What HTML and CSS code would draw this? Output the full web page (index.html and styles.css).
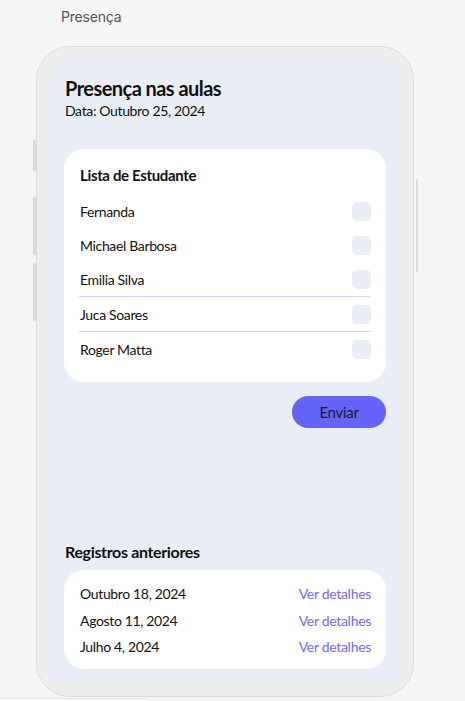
FILE: index.html
```html
<!DOCTYPE html>
<html lang="pt">
<head>
<meta charset="utf-8">
<title>Presença</title>
<link rel="stylesheet" href="styles.css">
</head>
<body>
<div class="page-title">Presença</div>
<div class="phone">
  <span class="side-btn b1"></span>
  <span class="side-btn b2"></span>
  <span class="side-btn b3"></span>
  <span class="side-btn b4"></span>
  <div class="screen">
    <h1 class="title">Presença nas aulas</h1>
    <p class="date">Data: Outubro 25, 2024</p>
    <section class="card list">
      <h2 class="card-title">Lista de Estudante</h2>
      <div class="row"><span>Fernanda</span><span class="check"></span></div>
      <div class="row"><span>Michael Barbosa</span><span class="check"></span></div>
      <div class="row line"><span>Emilia Silva</span><span class="check"></span></div>
      <div class="row line"><span>Juca Soares</span><span class="check"></span></div>
      <div class="row"><span>Roger Matta</span><span class="check"></span></div>
    </section>
    <div class="actions"><button class="send">Enviar</button></div>
    <section class="history">
      <h2 class="sub-title">Registros anteriores</h2>
      <div class="card records">
        <div class="rec"><span>Outubro 18, 2024</span><a class="link">Ver detalhes</a></div>
        <div class="rec"><span>Agosto 11, 2024</span><a class="link">Ver detalhes</a></div>
        <div class="rec"><span>Julho 4, 2024</span><a class="link">Ver detalhes</a></div>
      </div>
    </section>
  </div>
</div>
<div class="under"></div>
</body>
</html>
```
FILE: styles.css
```css
* { box-sizing: border-box; }
html, body { margin: 0; padding: 0; }
body {
  background: #f5f5f5;
  font-family: Lato, "Open Sans", sans-serif;
  color: #111;
  width: 465px;
  height: 701px;
  overflow: hidden;
}
.page-title {
  font-family: Inter, Roboto, sans-serif;
  font-size: 14px;
  color: #555;
  padding: 8px 0 0 61px;
  height: 46px;
  letter-spacing: -0.2px;
}
.phone {
  position: relative;
  margin-left: 36px;
  width: 378px;
  height: 651px;
  background: #ededed;
  border: 1.5px solid #dcdcdc;
  border-radius: 34px;
  padding: 12px;
}
.side-btn {
  position: absolute;
  width: 3px;
  background: #d9d9d9;
  border-radius: 1px;
}
.b1 { left: -4.5px; top: 93px; height: 31px; }
.b2 { left: -4.5px; top: 150px; height: 58px; }
.b3 { left: -4.5px; top: 216px; height: 58px; }
.b4 { right: -4.5px; top: 132px; height: 93px; width: 2px; }
.screen {
  height: 100%;
  background: #e9eef6;
  border-radius: 22px;
  padding: 17px 15px 15px 15px;
  display: flex;
  flex-direction: column;
  letter-spacing: -0.35px;
}
.title {
  margin: 0 0 0 1px;
  font-size: 20px;
  font-weight: 700;
  line-height: 24px;
  letter-spacing: -0.55px;
}
.date {
  margin: 1px 0 0 1px;
  font-size: 14px;
  line-height: 20px;
}
.card {
  background: #fff;
  border-radius: 20px;
}
.list {
  margin-top: 28px;
  padding: 16px 15px 16px 15px;
}
.card-title {
  margin: 0 0 9px 1px;
  font-size: 15px;
  font-weight: 700;
  line-height: 20px;
}
.row {
  display: flex;
  justify-content: space-between;
  align-items: center;
  height: 34px;
  font-size: 14px;
  padding-left: 1px;
}
.row.tall { height: 35px; }
.row.line { height: 35px; border-bottom: 1px solid #d3d3fb; }
.check {
  width: 19px;
  height: 19px;
  border-radius: 5px;
  background: #e9edf5;
}
.actions {
  display: flex;
  justify-content: flex-end;
  margin-top: 14px;
}
.send {
  width: 94px;
  height: 32px;
  border: none;
  border-radius: 16px;
  background: #6464fb;
  color: #1a1a2e;
  font-family: Lato, sans-serif;
  font-size: 15px;
  letter-spacing: -0.3px;
  padding: 0;
}
.history { margin-top: auto; }
.sub-title {
  margin: 0 0 8px 1px;
  font-size: 16px;
  font-weight: 700;
  line-height: 20px;
}
.records {
  padding: 11px 15px 9px 16px;
}
.rec {
  display: flex;
  justify-content: space-between;
  align-items: center;
  height: 26.5px;
  font-size: 14px;
}
.link { color: #716cf7; letter-spacing: -0.3px; }
.under {
  width: 147px;
  height: 3px;
  margin-top: 1px;
  border-top: 1px solid #e2e2e2;
  background: #fafafa;
}
```
